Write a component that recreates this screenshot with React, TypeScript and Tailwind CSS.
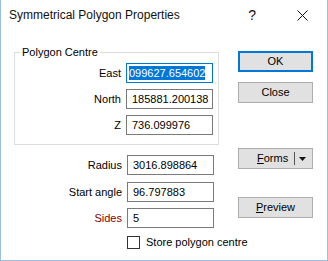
import React from "react";

function Field({ label, value, labelW, red, focused }: { label: string; value: string; labelW: string; red?: boolean; focused?: boolean }) {
  return (
    <div className="flex items-center h-[20px]">
      <div className={`${labelW} shrink-0 text-right ${red ? "text-[#800000]" : "text-black"}`}>{label}</div>
      <div
        className={`ml-[5px] w-[87px] h-[20px] shrink-0 flex items-center overflow-hidden whitespace-nowrap border ${
          focused ? "border-[#0078d7]" : "border-[#7a7a7a]"
        }`}
      >
        {focused ? (
          <span className="ml-[2px] bg-[#0078d7] text-white leading-[14px]">099627.654602</span>
        ) : (
          <span className="pl-[5px]">{value}</span>
        )}
      </div>
    </div>
  );
}

function Btn({ children, primary, className = "" }: { children: React.ReactNode; primary?: boolean; className?: string }) {
  return (
    <div
      className={`w-[75px] h-[21px] bg-[#e1e1e1] flex items-center justify-center ${
        primary ? "border-2 border-[#0078d7]" : "border border-[#adadad]"
      } ${className}`}
    >
      {children}
    </div>
  );
}

export default function App() {
  return (
    <div className="w-[328px] h-[261px] bg-white border border-t-0 border-[#99c0e4] font-['Liberation_Sans',Arial,sans-serif] text-[11px] text-black overflow-hidden">
      {/* Title bar */}
      <div className="h-[30px] flex items-center pl-[8px] relative">
        <span className="text-[12px] text-[#111]">Symmetrical Polygon Properties</span>
        <span className="ml-auto mr-[41px] text-[14px] text-[#111]">?</span>
        <svg width="11" height="11" viewBox="0 0 11 11" className="mr-[19px]">
          <path d="M0.5 0.5 L10.5 10.5 M10.5 0.5 L0.5 10.5" stroke="#111" strokeWidth="1" />
        </svg>
      </div>
      {/* Body */}
      <div className="flex">
        <div className="ml-[13px] w-[205px] shrink-0 pt-[16px]">
          <fieldset className="border border-[#dcdcdc] pr-[4px] pb-[9px]">
            <legend className="ml-[5px] px-[2px] leading-[13px]">Polygon Centre</legend>
            <div className="flex flex-col gap-[6px] pt-[4px]">
              <Field label="East" value="" labelW="w-[106px]" focused />
              <Field label="North" value="185881.200138" labelW="w-[106px]" />
              <Field label="Z" value="736.099976" labelW="w-[106px]" />
            </div>
          </fieldset>
          <div className="mt-[10px]">
            <Field label="Radius" value="3016.898864" labelW="w-[108px]" />
          </div>
          <div className="mt-[7px]">
            <Field label="Start angle" value="96.797883" labelW="w-[108px]" />
          </div>
          <div className="mt-[6px]">
            <Field label="Sides" value="5" labelW="w-[108px]" red />
          </div>
          <div className="mt-[6px] ml-[113px] flex items-center whitespace-nowrap">
            <div className="w-[13px] h-[13px] shrink-0 border border-[#333] bg-white" />
            <span className="ml-[6px] shrink-0">Store polygon centre</span>
          </div>
        </div>
        <div className="ml-[19px] pt-[21px] flex flex-col">
          <Btn primary>OK</Btn>
          <Btn className="mt-[10px]">Close</Btn>
          <div className="mt-[45px] w-[75px] h-[21px] bg-[#e1e1e1] border border-[#adadad] flex items-center">
            <span className="ml-[18px]">
              <span className="underline">F</span>orms
            </span>
            <div className="ml-[6px] w-px h-[13px] bg-[#555]" />
            <svg width="7" height="4" viewBox="0 0 7 4" className="ml-[4px]">
              <path d="M0 0 L7 0 L3.5 4 Z" fill="#111" />
            </svg>
          </div>
          <Btn className="mt-[28px]">
            <span>
              <span className="underline">P</span>review
            </span>
          </Btn>
        </div>
      </div>
    </div>
  );
}
